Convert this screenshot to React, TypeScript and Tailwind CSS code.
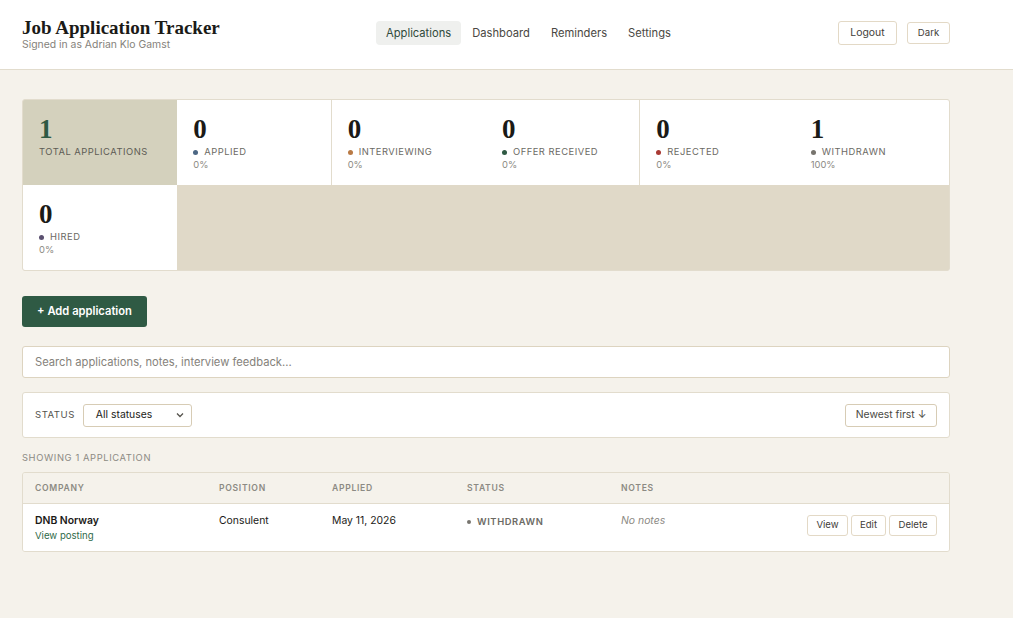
import React from "react";

const sans = { fontFamily: "Inter, 'Liberation Sans', sans-serif" };

type Stat = { label: string; value: number; pct: string; dot: string };

const stats: Stat[] = [
  { label: "Applied", value: 0, pct: "0%", dot: "bg-[#4c6784]" },
  { label: "Interviewing", value: 0, pct: "0%", dot: "bg-[#b97a45]" },
  { label: "Offer received", value: 0, pct: "0%", dot: "bg-[#2f5a44]" },
  { label: "Rejected", value: 0, pct: "0%", dot: "bg-[#a93a34]" },
  { label: "Withdrawn", value: 1, pct: "100%", dot: "bg-[#77746e]" },
  { label: "Hired", value: 0, pct: "0%", dot: "bg-[#5b5070]" },
];

const StatCell: React.FC<{ stat: Stat; border?: boolean }> = ({ stat, border }) => (
  <div className={`h-[85px] bg-white px-[16px] pt-[15px] ${border ? "border-r border-[#e2dccd]" : ""}`}>
    <div className="font-['Liberation_Serif',serif] text-[27px] font-bold leading-[28px] text-[#1b1a17]">
      {stat.value}
    </div>
    <div className="mt-[3px] flex items-center gap-[6px] text-[9.4px] uppercase leading-[12px] tracking-[0.5px] text-[#6c6a64]">
      <span className={`h-[5px] w-[5px] rounded-full ${stat.dot}`} />
      {stat.label}
    </div>
    <div className="mt-px text-[9.4px] leading-[12px] text-[#8c8a83]">{stat.pct}</div>
  </div>
);

export default function App() {
  return (
    <div style={sans} className="min-h-screen bg-[#f5f2eb] text-[#1b1a17]">
      <header className="flex h-[70px] items-start border-b border-[#e2dccd] bg-white pl-[22px] pr-[63px] pt-[17px]">
        <div className="w-[354px]">
          <h1 className="font-['Liberation_Serif',serif] text-[19px] font-bold leading-[22px] text-[#1b1a17]">
            Job Application Tracker
          </h1>
          <div className="text-[10.4px] leading-[12px] text-[#85827b]">Signed in as Adrian Klo Gamst</div>
        </div>
        <nav className="mt-[4px] flex items-center gap-px text-[11.2px] leading-[14px] text-[#4a4843]">
          <span className="rounded-[4px] bg-[#eff0ee] px-[10px] py-[5px] text-[#2f4a3c]">Applications</span>
          <span className="px-[10px] py-[5px]">Dashboard</span>
          <span className="px-[10px] py-[5px]">Reminders</span>
          <span className="px-[10px] py-[5px]">Settings</span>
        </nav>
        <div className="ml-auto mt-[4px] flex items-center gap-[10px] text-[10.4px] text-[#3f3d39]">
          <button className="h-[24px] w-[59px] rounded-[3px] border border-[#e3d9c6] bg-white">Logout</button>
          <button className="h-[22px] w-[43px] rounded-[3px] border border-[#e3d9c6] bg-white text-[9.6px]">Dark</button>
        </div>
      </header>

      <main className="box-content w-[928px] pl-[22px] pt-[29px]">
        <div className="grid grid-cols-6 overflow-hidden rounded-[3px] border border-[#e2dccd] bg-[#e0d9c8]">
          <div className="h-[85px] bg-[#d4d1bd] px-[16px] pt-[15px]">
            <div className="font-['Liberation_Serif',serif] text-[27px] font-bold leading-[28px] text-[#2f5a44]">1</div>
            <div className="mt-[3px] text-[9.4px] uppercase leading-[12px] tracking-[0.5px] text-[#5e5c55]">
              Total applications
            </div>
          </div>
          <StatCell stat={stats[0]} border />
          <StatCell stat={stats[1]} />
          <StatCell stat={stats[2]} border />
          <StatCell stat={stats[3]} />
          <StatCell stat={stats[4]} />
          <StatCell stat={stats[5]} />
        </div>

        <button className="mt-[25px] h-[31px] w-[125px] rounded-[3px] bg-[#2f5a44] text-[11.2px] font-semibold text-white">
          + Add application
        </button>

        <div className="mt-[19px] flex h-[32px] items-center rounded-[3px] border border-[#ddd4c0] bg-white px-[12px] text-[11.2px] text-[#85827b]">
          Search applications, notes, interview feedback...
        </div>

        <div className="mt-[14px] flex h-[46px] items-center rounded-[3px] border border-[#e2dccd] bg-white px-[12px]">
          <span className="text-[9.6px] uppercase tracking-[0.5px] text-[#55534d]">Status</span>
          <div className="ml-[8px] flex h-[23px] w-[109px] items-center justify-between rounded-[3px] border border-[#d7ccb5] bg-white pl-[12px] pr-[6px] text-[10.4px] text-[#1b1a17]">
            All statuses
            <svg width="10" height="10" viewBox="0 0 10 10" fill="none" stroke="#55534d" strokeWidth="1.3">
              <path d="M2 3.5 5 6.5 8 3.5" />
            </svg>
          </div>
          <button className="ml-auto h-[23px] w-[92px] rounded-[3px] border border-[#d7ccb5] bg-white text-[10.4px] text-[#4a4843]">
            Newest first ↓
          </button>
        </div>

        <div className="mt-[14px] text-[9.4px] uppercase leading-[12px] tracking-[0.6px] text-[#8c8a83]">
          Showing 1 application
        </div>

        <div className="mt-[8px] overflow-hidden rounded-[3px] border border-[#e2dccd]">
          <div className="grid h-[31px] grid-cols-[184px_113px_135px_154px_1fr] items-center border-b border-[#e2dccd] bg-[#f5f2eb] px-[12px] text-[8.6px] font-semibold uppercase tracking-[0.7px] text-[#8c8a83]">
            <span>Company</span>
            <span>Position</span>
            <span>Applied</span>
            <span>Status</span>
            <span>Notes</span>
          </div>
          <div className="grid h-[47px] grid-cols-[184px_113px_135px_154px_1fr] bg-white px-[12px] pt-[10px] text-[10.4px]">
            <div>
              <div className="font-semibold leading-[14px] text-[#1b1a17]">DNB Norway</div>
              <div className="mt-[2px] text-[9.6px] leading-[12px] text-[#2f6a4a]">View posting</div>
            </div>
            <div className="leading-[14px]">Consulent</div>
            <div className="leading-[14px]">May 11, 2026</div>
            <div className="flex h-[16px] items-center gap-[6px] text-[9.4px] font-semibold uppercase tracking-[0.6px] text-[#6c6a64]">
              <span className="h-[4px] w-[4px] rounded-full bg-[#77746e]" />
              Withdrawn
            </div>
            <div className="flex items-start justify-between">
              <span className="text-[10.4px] italic leading-[14px] text-[#8c8a83]">No notes</span>
              <div className="mt-px flex gap-[3px] text-[9.6px] text-[#3f3d39]">
                <button className="h-[21px] w-[41px] rounded-[3px] border border-[#e3d9c6] bg-white">View</button>
                <button className="h-[21px] w-[35px] rounded-[3px] border border-[#e3d9c6] bg-white">Edit</button>
                <button className="h-[21px] w-[48px] rounded-[3px] border border-[#e3d9c6] bg-white">Delete</button>
              </div>
            </div>
          </div>
        </div>
      </main>
    </div>
  );
}
